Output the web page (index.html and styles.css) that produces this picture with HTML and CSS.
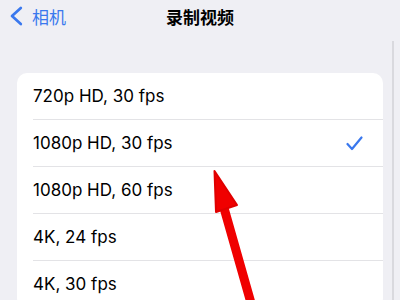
FILE: index.html
```html
<!DOCTYPE html>
<html>
<head>
    <title>录制视频</title>
    <link rel="stylesheet" href="styles.css">
</head>
<body>
    <div class="navbar">
        <div class="back">
            <svg class="chevron" width="14" height="20" viewBox="0 0 14 20">
                <path d="M11.8 2 L3 10 L11.8 18" fill="none" stroke="#3a78ee" stroke-width="2.7" stroke-linecap="round" stroke-linejoin="round"/>
            </svg>
            <span>相机</span>
        </div>
        <div class="title">录制视频</div>
        <div></div>
    </div>

    <div class="card">
        <div class="row"><span>720p HD, 30 fps</span></div>
        <div class="row"><span>1080p HD, 30 fps</span>
            <svg class="check" width="17" height="15" viewBox="0 0 17 15">
                <path d="M1.5 8 L6 13 L15.5 1.5" fill="none" stroke="#3a78ee" stroke-width="2.2" stroke-linecap="round" stroke-linejoin="round"/>
            </svg>
        </div>
        <div class="row"><span>1080p HD, 60 fps</span></div>
        <div class="row"><span>4K, 24 fps</span></div>
        <div class="row"><span>4K, 30 fps</span></div>
    </div>

    <div class="scrollbar"></div>

    <!-- annotation arrow -->
    <svg class="arrow" width="400" height="300" viewBox="0 0 400 300">
        <path d="M253 310 L224 208" stroke="#f00000" stroke-width="9" stroke-linecap="round"/>
        <path d="M214.5 171 L237 205 L216 212 Z" fill="#f00000" stroke="#e00000" stroke-width="2" stroke-linejoin="round"/>
    </svg>
</body>
</html>
```

FILE: styles.css
```css
body, html {
    margin: 0;
    padding: 0;
    height: 100%;
    overflow: hidden;
    background-color: #efeff4;
    font-family: Inter, "Noto Sans CJK SC", sans-serif;
    color: #000;
}
.navbar {
    display: grid;
    grid-template-columns: 1fr auto 1fr;
    align-items: center;
    height: 32px;
    padding: 0 9px;
}
.back {
    display: flex;
    align-items: center;
    gap: 9px;
    color: #3a78ee;
    font-size: 17px;
    font-family: "Noto Sans CJK SC", sans-serif;
}
.title {
    font-family: "Noto Sans CJK SC", sans-serif;
    font-size: 17px;
    font-weight: 700;
}
.card {
    margin: 41px 17px 0 17px;
    background-color: #fff;
    border-radius: 10px;
    padding-left: 16px;
}
.row {
    display: flex;
    align-items: center;
    justify-content: space-between;
    height: 46px;
    border-bottom: 1px solid #e3e3e6;
    font-size: 17px;
    padding-right: 20px;
}
.scrollbar {
    position: absolute;
    top: 41px;
    left: 392px;
    width: 2px;
    height: 260px;
    background-color: #d9d9de;
}
.arrow {
    position: absolute;
    top: 0;
    left: 0;
}
```
